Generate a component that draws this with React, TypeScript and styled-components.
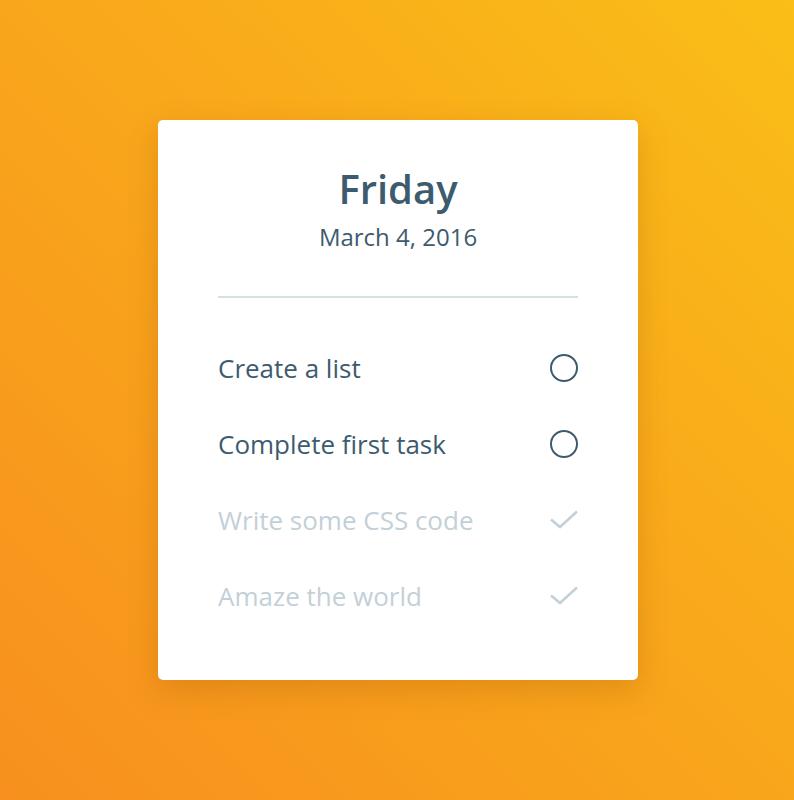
import styled, { createGlobalStyle } from 'styled-components';

const GlobalStyle = createGlobalStyle`
  html, body {
    margin: 0;
    padding: 0;
  }
  body {
    font-family: "Open Sans", "Noto Sans", sans-serif;
  }
`;

const Page = styled.div`
  width: 794px;
  height: 800px;
  background: linear-gradient(45deg, #f7901e 0%, #f9a81b 55%, #fabe17 100%);
  display: flex;
  align-items: flex-start;
  justify-content: center;
  padding: 120px 0 0 2px;
  box-sizing: border-box;
`;

const Card = styled.div`
  width: 480px;
  height: 560px;
  box-sizing: border-box;
  background: #ffffff;
  border-radius: 5px;
  box-shadow: 0 10px 30px rgba(150, 80, 0, 0.25);
  padding: 46px 60px 0;
  display: flex;
  flex-direction: column;
`;

const Header = styled.header`
  text-align: center;
  padding-bottom: 44px;
  border-bottom: 2px solid #d6e0e5;
`;

const Day = styled.h1`
  margin: 0;
  font-size: 40px;
  line-height: 46px;
  font-weight: 600;
  color: #3d5b6e;
`;

const DateLine = styled.div`
  margin-top: 10px;
  font-size: 24px;
  line-height: 30px;
  color: #3d5b6e;
`;

const List = styled.ul`
  list-style: none;
  margin: 0;
  padding: 32px 0 0;
`;

const Item = styled.li<{ $done: boolean }>`
  height: 76px;
  display: flex;
  align-items: center;
  justify-content: space-between;
  font-size: 26px;
  color: ${p => (p.$done ? '#c3d0d7' : '#3d5b6e')};

  svg {
    display: block;
  }
`;

const Circle = () => (
  <svg width="28" height="28" viewBox="0 0 28 28">
    <circle cx="14" cy="14" r="13" fill="none" stroke="#3d5b6e" strokeWidth="2" />
  </svg>
);

const Check = () => (
  <svg width="28" height="28" viewBox="0 0 28 28">
    <path d="M1 13.5 L10 21 L27 5.5" fill="none" stroke="#c3d0d7" strokeWidth="2.6" />
  </svg>
);

const tasks = [
  { text: 'Create a list', done: false },
  { text: 'Complete first task', done: false },
  { text: 'Write some CSS code', done: true },
  { text: 'Amaze the world', done: true },
];

export default function App() {
  return (
    <>
      <GlobalStyle />
      <Page>
        <Card>
          <Header>
            <Day>Friday</Day>
            <DateLine>March 4, 2016</DateLine>
          </Header>
          <List>
            {tasks.map(t => (
              <Item key={t.text} $done={t.done}>
                <span>{t.text}</span>
                {t.done ? <Check /> : <Circle />}
              </Item>
            ))}
          </List>
        </Card>
      </Page>
    </>
  );
}
